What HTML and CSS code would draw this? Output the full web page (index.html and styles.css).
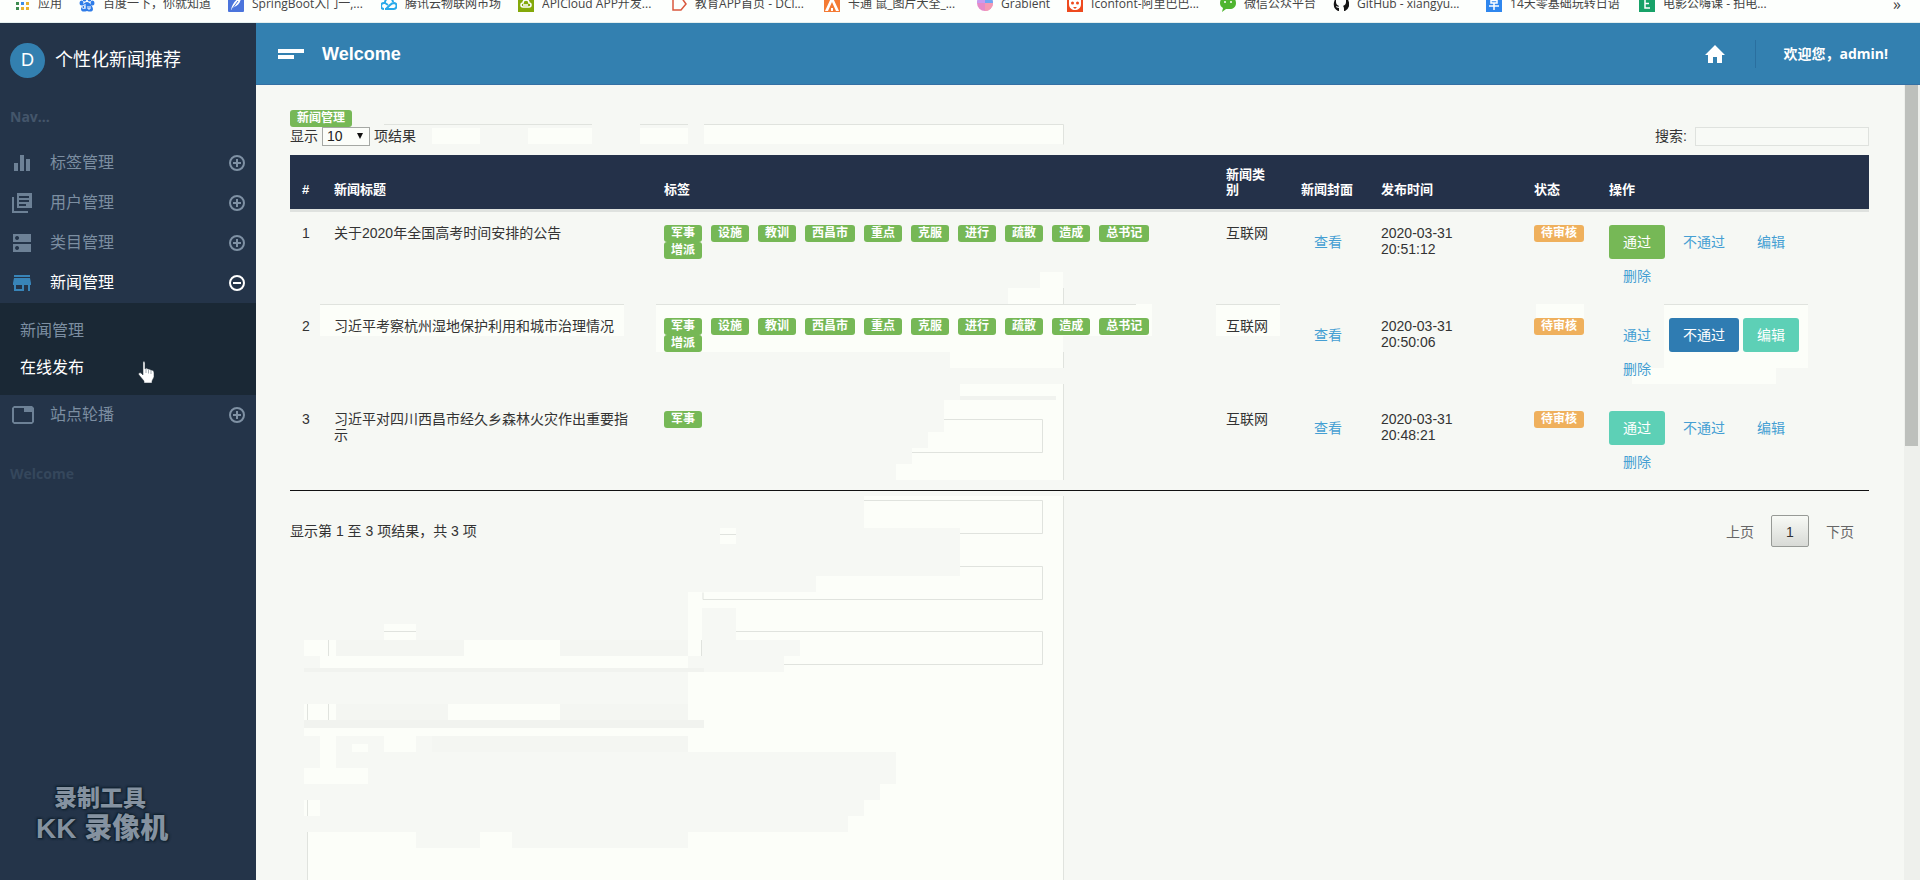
FILE: index.html
```html
<!DOCTYPE html>
<html lang="zh-CN">
<head>
<meta charset="utf-8">
<title>个性化新闻推荐</title>
<link rel="stylesheet" href="styles.css">
</head>
<body>
<nav class="bookmarks" aria-label="书签栏">
  <a href="#" class="bookmark"><svg viewBox="0 0 16 16"><g fill="#3d8b50"><path d="M2 1h3v3H2zM2 6h3v3H2z"/><path fill="#e0483c" d="M7 1h3v3H7z"/><path fill="#3d8bea" d="M7 6h3v3H7z"/><path fill="#e9b130" d="M12 1h3v3h-3zM12 6h3v3h-3zM7 11h3v3H7zM12 11h3v3h-3z"/><path d="M2 11h3v3H2z"/></g></svg><span>应用</span></a>
  <a href="#" class="bookmark"><svg viewBox="0 0 16 16" fill="#2f7ce8"><ellipse cx="2.500" cy="7" rx="2" ry="2.500"/><ellipse cx="5.500" cy="3" rx="2" ry="2.500"/><ellipse cx="10.500" cy="3" rx="2" ry="2.500"/><ellipse cx="13.500" cy="7" rx="2" ry="2.500"/><path d="M8 6c3 0 6 5 6 7 0 3-3 3-6 2-3 1-6 1-6-2 0-2 3-7 6-7z"/><path d="M6 8v5M6 11a1.500 1.500 0 1 0 0 .1M9 10v3h2v-3" fill="none" stroke="#fff"/></svg><span>百度一下，你就知道</span></a>
  <a href="#" class="bookmark"><svg viewBox="0 0 16 16"><rect width="16" height="16" rx="1" fill="#4b74dc"/><path d="M3 14C4 8 8 3 13 1c0 5-3 9-7 10z" fill="#fff"/><path d="M4 13l6-8" stroke="#4b74dc"/></svg><span class="cut">SpringBoot入门一,...</span></a>
  <a href="#" class="bookmark"><svg viewBox="0 0 16 16" fill="none" stroke="#27a9ea" stroke-width="2"><path d="M3 13a3 3 0 0 1 0-6h1a4 4 0 0 1 8-1M4 13h8a3 3 0 0 0 1-6c-2 0-3 1-4 2l-4 4M4 7l3 2"/></svg><span>腾讯云物联网市场</span></a>
  <a href="#" class="bookmark"><svg viewBox="0 0 16 16"><rect width="16" height="16" fill="#84a90a"/><path d="M5 11a2 2 0 0 1 0-4 3 3 0 0 1 6 0 2 2 0 0 1 0 4zM5 9h5" fill="none" stroke="#fff" stroke-width="1.500"/></svg><span class="cut">APICloud APP开发...</span></a>
  <a href="#" class="bookmark"><svg viewBox="0 0 16 16"><path d="M2 1h8l5 7-5 6H2z" fill="none" stroke="#d9583e" stroke-width="1.500"/></svg><span class="cut">教育APP首页 - DCl...</span></a>
  <a href="#" class="bookmark"><svg viewBox="0 0 16 16"><rect width="16" height="16" fill="#f47a34"/><path d="M1 15L7 2h2l6 13h-3L8 6l-4 9zM7 12h2v3H7z" fill="#fff"/></svg><span class="cut">卡通 鼠_图片大全_...</span></a>
  <a href="#" class="bookmark"><svg viewBox="0 0 16 16"><circle cx="8" cy="7" r="8" fill="#e58ac8"/><path d="M8-1a8 8 0 0 1 8 8H8z" fill="#6fa7f2"/><path d="M0 7a8 8 0 0 1 8-8v8z" fill="#c79af0"/><path d="M16 7a8 8 0 0 1-8 8V7z" fill="#f39ab4"/></svg><span>Grabient</span></a>
  <a href="#" class="bookmark"><svg viewBox="0 0 16 16"><rect width="16" height="16" fill="#ee4a1e"/><path d="M2 2l3 1h6l3-1v6c0 4-3 6-6 6s-6-2-6-6z" fill="#fff"/><circle cx="5.500" cy="7" r="1.500" fill="#ee4a1e"/><circle cx="10.500" cy="7" r="1.500" fill="#ee4a1e"/><path d="M6 11h4l-2 2z" fill="#ee4a1e"/></svg><span class="cut">Iconfont-阿里巴巴...</span></a>
  <a href="#" class="bookmark"><svg viewBox="0 0 16 16"><path d="M8 0c5 0 8 3 8 7s-3 6-6 6H6l-4 3 1-4C1 11 0 9 0 7c0-4 3-7 8-7z" fill="#4fb52f"/><circle cx="5" cy="6" r="1" fill="#fff"/><circle cx="11" cy="6" r="1" fill="#fff"/></svg><span>微信公众平台</span></a>
  <a href="#" class="bookmark"><svg viewBox="0 0 16 16"><path d="M8 0a8 8 0 0 0-3 15c1 0 1 0 1-1v-2c-2 0-3-1-3-2 2 1 3 1 3 0-2-1-3-2-3-4V3l3 1h4l3-1v3c0 2-1 3-3 4 1 1 1 2 1 4 0 1 0 1 1 1A8 8 0 0 0 8 0z" fill="#151515"/></svg><span class="cut">GitHub - xiangyu...</span></a>
  <a href="#" class="bookmark"><svg viewBox="0 0 16 16"><rect width="16" height="16" fill="#2f87ee"/><path d="M5 2h6v5H5zM5 4.500h6M3 10h10M8 7v7" fill="none" stroke="#fff" stroke-width="1.500"/></svg><span class="cut">14天零基础玩转日语</span></a>
  <a href="#" class="bookmark"><svg viewBox="0 0 16 16"><rect width="16" height="16" fill="#17a268"/><path d="M11 3H6v9h5M6 7.500h4" fill="none" stroke="#fff" stroke-width="1.500"/></svg><span class="cut">电影公嗨课 - 拍电...</span></a>
  <button type="button" class="more" aria-label="更多书签">»</button>
</nav>

<div class="app">
  <aside class="sidebar">
    <a href="#" class="brand"><span class="brand-mark">D</span><span>个性化新闻推荐</span></a>
    <h2 class="nav-title">Nav...</h2>
    <ul class="nav">
      <li><a href="#" class="nav-link"><svg class="nav-icon" viewBox="0 0 20 20"><path d="M2 10h4v8H2zM8 2h4v16H8zM14 6h4v12h-4z"/></svg><span>标签管理</span><svg class="toggle" viewBox="0 0 16 16"><circle cx="8" cy="8" r="7"/><path d="M4 8h8M8 4v8"/></svg></a></li>
      <li><a href="#" class="nav-link"><svg class="nav-icon" viewBox="0 0 20 20"><path fill-rule="evenodd" d="M5 0h15v15H5zM7 3v2h10V3zM7 7v2h10V7zM7 11v2h7v-2z"/><path d="M0 4h2v14h14v2H0z"/></svg><span>用户管理</span><svg class="toggle" viewBox="0 0 16 16"><circle cx="8" cy="8" r="7"/><path d="M4 8h8M8 4v8"/></svg></a></li>
      <li><a href="#" class="nav-link"><svg class="nav-icon" viewBox="0 0 20 20"><path fill-rule="evenodd" d="M1 1h18v8H1zM5 3a2 2 0 1 0 .1 0zM1 11h18v8H1zM5 13a2 2 0 1 0 .1 0z"/></svg><span>类目管理</span><svg class="toggle" viewBox="0 0 16 16"><circle cx="8" cy="8" r="7"/><path d="M4 8h8M8 4v8"/></svg></a></li>
      <li><a href="#" class="nav-link active"><svg class="nav-icon" viewBox="0 0 20 20"><path fill-rule="evenodd" d="M2 2h16v2H2zM2 5h16l1 5v2h-1v6h-2v-6h-4v6H2v-6H1v-2zM4 12v4h6v-4z"/></svg><span>新闻管理</span><svg class="toggle" viewBox="0 0 16 16"><circle cx="8" cy="8" r="7"/><path d="M4 8h8"/></svg></a>
        <ul class="subnav">
          <li><a href="#">新闻管理</a></li>
          <li><a href="#" class="current">在线发布<svg class="pointer" viewBox="0 0 16 22"><path d="M5 1c1-1 2 0 2 1v6l1-1 2 1 1 0 2 1c2 0 3 1 3 3v4l-2 4v2H6v-2L1 14c-1-1 0-3 2-2l2 2z" fill="#fff" stroke="#26323c" stroke-width=".5"/><path d="M8 8v4M10.500 8.500v4M13 9v4" stroke="#7d8890" stroke-width=".7"/></svg></a></li>
        </ul></li>
      <li><a href="#" class="nav-link"><svg class="nav-icon wide" viewBox="0 0 22 18"><path fill-rule="evenodd" d="M2 0h18l2 2v14l-2 2H2l-2-2V2zM2 2v14h18V6h-8V2z"/></svg><span>站点轮播</span><svg class="toggle" viewBox="0 0 16 16"><circle cx="8" cy="8" r="7"/><path d="M4 8h8M8 4v8"/></svg></a></li>
    </ul>
    <h2 class="nav-title faded">Welcome</h2>
    <div class="watermark"><span>录制工具</span><strong>KK 录像机</strong></div>
  </aside>

  <div class="workspace">
    <header class="topbar">
      <button type="button" class="menu" aria-label="菜单"><i></i><i></i></button>
      <h1>Welcome</h1>
      <a href="#" class="home" aria-label="首页"><svg viewBox="0 0 20 18"><path d="M10 0l10 10h-3v8h-5v-6H8v6H3v-8H0z" fill="#fff"/></svg></a>
      <span class="user">欢迎您，admin!</span>
    </header>

    <div class="viewport">
      <main class="content">
        <svg class="backdrop" viewBox="256 85 1648 795" aria-hidden="true">
          <path fill="#fcfef9" d="M432 128h48v16h-48zM528 128h64v16h-64zM640 128h48v16h-48zM704 124h359v20H704zM1040 272h23v16h-23zM1008 288h55v16h-55zM320 304h304v32H320zM656 304h496v32H656zM656 336h407v16H656zM950 352h113v16H950zM1216 304h64v32h-64zM1536 304h48v16h-48zM1664 304h144v64h-144zM1632 368h144v16h-144zM960 384h104v16H960zM944 400h120v32H944zM928 432h136v16H928zM912 448h152v16H912zM896 464h168v16H896z"/>
          <path fill="#fcfef9" d="M864 496h200v32H864zM960 528h104v48H960zM816 576h248v16H816zM688 592h376v16H688zM736 608h328v32H736zM800 640h264v16H800zM784 656h280v16H784zM688 672h376v80H688zM896 752h168v32H896zM880 784h184v16H880zM864 800h200v16H864zM848 816h216v16H848zM688 832h376v16H688zM307 832h109v16H307zM480 832h32v16h-32zM307 848h757v32H307zM720 528h16v16h-16zM384 624h32v16h-32zM304 640h32v16h-32zM464 640h96v16h-96zM688 608h14v48h-14zM320 656h368v12H320zM304 704h32v16h-32zM448 704h112v16H448zM304 728h384v8H304zM320 736h16v48h-16zM352 744h16v8h-16zM384 736h32v16h-32zM304 768h64v16h-64zM304 800h16v16h-16z"/>
          <path fill="#f1f3ef" d="M960 396h96v4h-96zM304 668h400v4H304zM304 720h400v8H304z"/>
          <path fill="#f4f6f2" d="M432 736h256v16H432zM336 640h128v16H336zM560 640h128v16H560zM336 704h112v16H336zM560 704h128v16H560z"/>
          <path fill="none" stroke="#e0e3de" d="M384 124.500h208M640 124.500h48M704 124.500h359.500v20M320 304.500h304M656 304.500h480M1216 304.500h64M1664 304.500h144M1063.500 288v16M1063.500 352v16M1063.500 384v96M1063.500 496v384M944 419.500h98.500v33H912M864 500.500h178.500v33H960M960 566.500h82.500v33H703v-7M736 631.500h306.500v33H784M720 534.500h16M384 631.500h32M328.500 640v16M701.500 640v16M307.500 704v16M328.500 704v16M307.500 800v16M307.500 832v48"/>
        </svg>
        <span class="badge">新闻管理</span>
        <div class="controls">
          <label>显示 <select><option>10</option></select> 项结果</label>
          <label class="search">搜索: <input type="search"></label>
        </div>
        <table>
          <colgroup><col class="c-num"><col class="c-title"><col class="c-tags"><col class="c-kind"><col class="c-cover"><col class="c-date"><col class="c-state"><col class="c-act"></colgroup>
          <thead><tr><th>#</th><th>新闻标题</th><th>标签</th><th>新闻类别</th><th>新闻封面</th><th>发布时间</th><th>状态</th><th>操作</th></tr></thead>
          <tbody>
            <tr><td>1</td><td>关于2020年全国高考时间安排的公告</td>
              <td><div class="tags"><span class="badge">军事</span><span class="badge">设施</span><span class="badge">教训</span><span class="badge">西昌市</span><span class="badge">重点</span><span class="badge">克服</span><span class="badge">进行</span><span class="badge">疏散</span><span class="badge">造成</span><span class="badge">总书记</span><span class="badge">增派</span></div></td>
              <td>互联网</td><td><a href="#" class="view">查看</a></td><td>2020-03-31<br>20:51:12</td><td><span class="badge pending">待审核</span></td>
              <td><div class="actions"><button type="button" class="green">通过</button><button type="button">不通过</button><button type="button">编辑</button><button type="button">删除</button></div></td></tr>
            <tr><td>2</td><td>习近平考察杭州湿地保护利用和城市治理情况</td>
              <td><div class="tags"><span class="badge">军事</span><span class="badge">设施</span><span class="badge">教训</span><span class="badge">西昌市</span><span class="badge">重点</span><span class="badge">克服</span><span class="badge">进行</span><span class="badge">疏散</span><span class="badge">造成</span><span class="badge">总书记</span><span class="badge">增派</span></div></td>
              <td>互联网</td><td><a href="#" class="view">查看</a></td><td>2020-03-31<br>20:50:06</td><td><span class="badge pending">待审核</span></td>
              <td><div class="actions"><button type="button">通过</button><button type="button" class="blue">不通过</button><button type="button" class="teal">编辑</button><button type="button">删除</button></div></td></tr>
            <tr><td>3</td><td>习近平对四川西昌市经久乡森林火灾作出重要指示</td>
              <td><div class="tags"><span class="badge">军事</span></div></td>
              <td>互联网</td><td><a href="#" class="view">查看</a></td><td>2020-03-31<br>20:48:21</td><td><span class="badge pending">待审核</span></td>
              <td><div class="actions"><button type="button" class="teal">通过</button><button type="button">不通过</button><button type="button">编辑</button><button type="button">删除</button></div></td></tr>
          </tbody>
        </table>
        <footer class="table-footer">
          <span>显示第 1 至 3 项结果，共 3 项</span>
          <div class="pager"><button type="button">上页</button><button type="button" class="page">1</button><button type="button">下页</button></div>
        </footer>
      </main>
      <div class="scroll-track" aria-hidden="true"><div class="scroll-thumb"></div></div>
    </div>
  </div>
</div>
</body>
</html>
```

FILE: styles.css
```css
* { box-sizing: border-box; }
body {
  margin: 0;
  height: 100vh;
  display: flex;
  flex-direction: column;
  overflow: hidden;
  background: #f6f8f4;
  color: #333;
  font: 14px/16px "Liberation Sans", "Noto Sans CJK SC", sans-serif;
}
a { text-decoration: none; color: inherit; }
ul { list-style: none; margin: 0; padding: 0; }
button { font: inherit; color: inherit; background: none; border: 0; padding: 0; cursor: pointer; }

/* Bookmarks */
.bookmarks {
  flex: none;
  height: 23px;
  display: flex;
  align-items: flex-end;
  gap: 17px;
  padding: 0 19px 10px 14px;
  overflow: hidden;
  background: #fdfffd;
  border-bottom: 1px solid #e4efee;
  color: #444;
  font: 12px/16px "Open Sans", "Noto Sans CJK SC", sans-serif;
}
.bookmark { display: flex; gap: 8px; white-space: nowrap; }
.bookmark svg { width: 16px; height: 16px; }
.cut { width: 112px; overflow: hidden; }
.more { margin-left: auto; font-size: 16px; }

.app { flex: 1; min-height: 0; display: flex; }

/* Sidebar */
.sidebar {
  flex: none;
  width: 256px;
  display: flex;
  flex-direction: column;
  background: #243449;
  color: #7c8ea1;
}
.brand {
  display: flex;
  align-items: center;
  gap: 10px;
  padding: 20px 10px 0;
  color: #fff;
  font-size: 18px;
  line-height: 35px;
}
.brand-mark {
  width: 35px;
  height: 35px;
  border-radius: 50%;
  background: #3380b0;
  text-align: center;
}
.nav-title {
  margin: 29px 10px 16px;
  color: #44566b;
  font: bold 14px/20px "Open Sans", sans-serif;
}
.nav-title.faded { color: #35475c; }
.nav-link {
  display: flex;
  align-items: center;
  height: 40px;
  padding: 0 11px 0 12px;
  font-size: 16px;
}
.nav-icon { width: 20px; height: 20px; margin-right: 18px; fill: #6d8196; }
.nav-icon.wide { width: 22px; height: 18px; margin-right: 16px; }
.toggle { width: 16px; height: 16px; margin-left: auto; fill: none; stroke: #7f91a4; stroke-width: 2; }
.active { color: #fff; }
.active .nav-icon { fill: #3884b8; }
.active .toggle { stroke: #fff; }
.subnav { padding: 9px 20px; background: #1a2835; font-size: 16px; line-height: 37px; }
.subnav a { display: block; position: relative; }
.current { color: #fff; }
.pointer { position: absolute; left: 118px; top: 12px; width: 16px; height: 22px; }
.watermark {
  margin: auto 0 34px 36px;
  display: flex;
  flex-direction: column;
  color: #8592a0;
  font: 900 23px/28px "Liberation Sans", "Noto Sans CJK SC", sans-serif;
  text-shadow: 0 0 3px #10202c, 1px 1px 2px #10202c, -1px -1px 2px #10202c;
}
.watermark span { padding-left: 18px; }
.watermark strong { font-size: 28px; line-height: 34px; }

/* Top bar */
.workspace { flex: 1; min-width: 0; display: flex; flex-direction: column; }
.topbar {
  flex: none;
  height: 62px;
  display: flex;
  align-items: center;
  padding: 0 32px 0 22px;
  background: #3380b0;
  border-bottom: 1px solid #3470a4;
  color: #fff;
}
.menu { display: flex; flex-direction: column; gap: 2px; }
.menu i { width: 26px; height: 4px; background: #fff; }
.menu i + i { width: 16px; }
.topbar h1 { margin: 0 0 0 18px; font-size: 18px; line-height: 20px; }
.home { margin-left: auto; padding-right: 30px; }
.home svg { display: block; width: 20px; height: 18px; }
.user {
  padding-left: 27px;
  border-left: 1px solid #2a6f9f;
  font: bold 14px/28px "Open Sans", "Noto Sans CJK SC", sans-serif;
}

/* Content */
.viewport { flex: 1; min-height: 0; display: flex; }
.content { position: relative; z-index: 0; flex: 1; min-width: 0; overflow: hidden; padding: 25px 35px 0 34px; }
.backdrop { position: absolute; left: 0; top: 0; z-index: -1; width: 1648px; height: 795px; }
.scroll-track { flex: none; width: 16px; padding: 0 2px 0 1px; background: #eef0ec; }
.scroll-thumb { height: 361px; background: #bdc0bc; }
.badge {
  display: block;
  width: fit-content;
  padding: 0 7px;
  border-radius: 3px;
  background: #76b856;
  color: #fff;
  font-size: 12px;
  font-weight: bold;
  line-height: 17px;
  white-space: nowrap;
}
.pending { background: #efb05c; }
.controls { display: flex; justify-content: space-between; height: 28px; }
.controls label { display: flex; align-items: center; gap: 4px; height: 18px; }
.controls select {
  appearance: none;
  width: 48px;
  height: 19px;
  padding: 0 4px;
  border: 1px solid #a5a8a4;
  border-radius: 0;
  background: #fbfdf9 linear-gradient(#222, #222);
  background: url("data:image/svg+xml,%3Csvg xmlns='http://www.w3.org/2000/svg' viewBox='0 0 8 8'%3E%3Cpath d='M1 1h6L4 7z' fill='%23111'/%3E%3C/svg%3E") no-repeat right 5px center / 8px 8px #fbfdf9;
  color: #222;
  font: inherit;
}
.controls .search { gap: 8px; }
.search input { width: 174px; height: 19px; border: 1px solid #dfe2de; background: #f8faf6; }

table { width: 100%; table-layout: fixed; border-collapse: separate; border-spacing: 0; border-bottom: 1px solid #111; }
.c-num { width: 32px; }
.c-title { width: 330px; }
.c-tags { width: auto; }
.c-kind { width: 75px; }
.c-cover { width: 80px; }
.c-date { width: 153px; }
.c-state { width: 75px; }
.c-act { width: 272px; }
th {
  padding: 12px;
  background: #243149;
  border-bottom: 3px solid #dfe2df;
  color: #fff;
  font-size: 13px;
  line-height: 15px;
  text-align: left;
  vertical-align: bottom;
}
td { padding: 13px 12px 12px; vertical-align: top; }
tbody tr:last-child td { padding-bottom: 11px; }
.tags { display: flex; flex-wrap: wrap; }
.tags .badge { margin-right: 9px; }
.view { display: block; padding: 9px 13px; color: #459fd3; }
.actions { display: flex; flex-wrap: wrap; column-gap: 4px; }
.actions button { height: 34px; padding: 0 14px; border-radius: 3px; color: #459fd3; }
.actions .green { background: #76b856; color: #fff; }
.actions .blue { background: #2f7cb2; color: #fff; }
.actions .teal { background: #5dd0b6; color: #fff; }

.table-footer { display: flex; justify-content: space-between; padding-top: 24px; line-height: 32px; }
.pager { display: flex; gap: 2px; color: #666; }
.pager button { min-width: 38px; height: 32px; padding: 0 14px; border: 1px solid transparent; border-radius: 2px; }
.pager .page { border-color: #979a96; background: linear-gradient(#f8faf6, #d8dad6); color: #333; }
```
